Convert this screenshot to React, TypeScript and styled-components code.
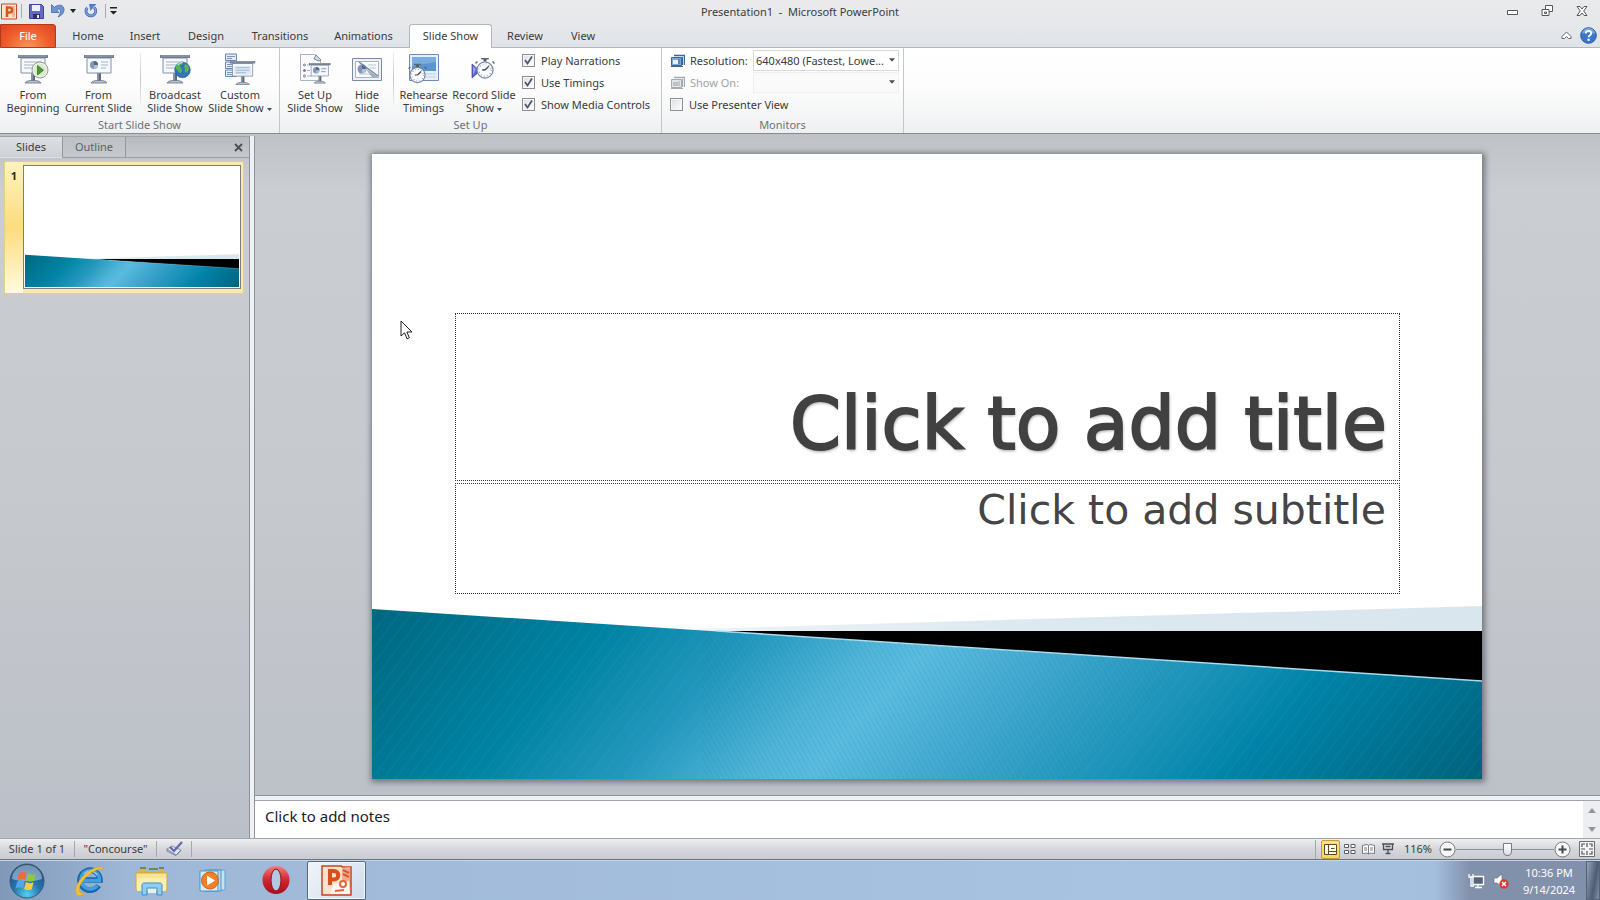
import React from "react";
import styled, { createGlobalStyle, css } from "styled-components";

const GlobalStyle = createGlobalStyle`
  *, *::before, *::after { box-sizing: border-box; }
  html, body { margin: 0; padding: 0; }
  body, button, input, select, textarea {
    font-family: "Noto Sans", "Open Sans", sans-serif;
    font-size: 11px;
    line-height: 13px;
    color: #3b3b3b;
  }
  button { background: none; border: 0; padding: 0; }
  svg { display: block; }
`;

const Window = styled.div`
  display: flex;
  flex-direction: column;
  min-height: 100vh;
`;

/* Title bar */

const TitleBar = styled.header`
  display: grid;
  grid-template-columns: 1fr auto 1fr;
  align-items: center;
  height: 24px;
  padding-bottom: 2px;
  background: linear-gradient(#eaeaed, #e6e8ea);
`;

const QuickAccess = styled.div`
  display: flex;
  align-items: center;
  padding-left: 1px;
`;

const QuickButton = styled.button<{ $gap?: number }>`
  margin-left: ${(p) => p.$gap ?? 0}px;
`;

const QuickDivider = styled.span<{ $gap: number }>`
  width: 1px;
  height: 14px;
  margin-left: ${(p) => p.$gap}px;
  background: #a9abb0;
`;

const WindowTitle = styled.h1`
  margin: 0;
  font-size: 11px;
  font-weight: 400;
  white-space: pre;
`;

const WindowControls = styled.div`
  display: flex;
  justify-content: flex-end;
  align-items: center;
  gap: 22px;
  padding-right: 12px;
`;

/* Tabs */

const TabStrip = styled.nav`
  display: flex;
  align-items: flex-end;
  height: 24px;
  border-bottom: 1px solid #b4b8be;
  background: linear-gradient(#e6e8ea, #e0e4e8);
`;

const Tab = styled.button<{ $width: number; $active?: boolean }>`
  width: ${(p) => p.$width}px;
  height: 23px;
  ${(p) =>
    p.$active &&
    css`
      height: 24px;
      margin-bottom: -1px;
      padding-bottom: 2px;
      border: 1px solid #b4b8be;
      border-bottom: 0;
      border-radius: 3px 3px 0 0;
      background: #fff;
    `}
`;

const FileTab = styled.button`
  width: 56px;
  height: 24px;
  margin-bottom: -1px;
  padding-bottom: 1px;
  border: 1px solid #b5381b;
  border-radius: 0 3px 0 0;
  background: radial-gradient(ellipse at 50% 110%, #f99a5c 0%, #ee5c2c 60%, #dd4520 100%);
  color: #fff;
`;

const TabStripEnd = styled.div`
  display: flex;
  align-items: center;
  gap: 8px;
  height: 24px;
  margin-left: auto;
  padding-right: 3px;
`;

/* Ribbon */

const Ribbon = styled.section`
  display: flex;
  height: 86px;
  border-bottom: 1px solid #888c91;
  background: linear-gradient(#fff, #fdfdfd 45%, #eff0f2);
`;

const Group = styled.div<{ $width: number }>`
  display: flex;
  flex-direction: column;
  width: ${(p) => p.$width}px;
  border-right: 1px solid #c3c6ca;
`;

const GroupBody = styled.div`
  display: flex;
  flex: 1;
  padding-left: 4px;
`;

const GroupLabel = styled.div`
  height: 15px;
  text-align: center;
  color: #6d727a;
`;

const LargeButton = styled.button<{ $width: number }>`
  display: flex;
  flex-direction: column;
  align-items: center;
  width: ${(p) => p.$width}px;
  padding-top: 5px;
  white-space: nowrap;
`;

const LargeLabel = styled.span`
  margin-top: 3px;
`;

const GroupDivider = styled.span`
  width: 1px;
  height: 52px;
  margin: 5px 4px 0 5px;
  background: linear-gradient(#eceef0, #c3c6ca, #eceef0);
`;

const ControlStack = styled.div`
  display: flex;
  flex-direction: column;
  padding: 1px 0 0 3px;
`;

const MonitorStack = styled(ControlStack)`
  padding-left: 4px;
`;

const ControlRow = styled.div`
  display: flex;
  align-items: center;
  gap: 5px;
  height: 22px;
`;

const CheckLabel = styled.label`
  display: flex;
  align-items: center;
  gap: 6px;
  height: 22px;
`;

const CheckFrame = styled.span`
  display: grid;
  width: 13px;
  height: 13px;
  border: 1px solid #8d9096;
  background: linear-gradient(135deg, #dcdee2, #fff);
  box-shadow: inset 0 0 0 1px #f6f6f7;

  & > * { grid-area: 1 / 1; }
  & > input { appearance: none; width: 11px; height: 11px; margin: 0; }
  & > svg { visibility: hidden; pointer-events: none; }
  & > input:checked + svg { visibility: visible; }
`;

const FieldName = styled.label<{ $muted?: boolean }>`
  width: 58px;
  color: ${(p) => (p.$muted ? "#a0a3a7" : "#3b3b3b")};
`;

const SelectFrame = styled.span<{ $muted?: boolean }>`
  display: grid;
  grid-template-columns: 1fr 9px;
  align-items: center;
  width: 146px;
  height: 21px;
  border: 1px solid ${(p) => (p.$muted ? "#eeeff1" : "#d5d8dc")};
  background: ${(p) => (p.$muted ? "#fafafa" : "#fff")};

  & > select {
    grid-area: 1 / 1 / 2 / 3;
    appearance: none;
    width: 100%;
    height: 19px;
    padding: 0 2px;
    border: 0;
    background: transparent;
  }
  & > svg { grid-area: 1 / 2; pointer-events: none; }
`;

/* Workspace */

const Workspace = styled.main`
  display: flex;
  flex: 1;
  padding-top: 2px;
  background: linear-gradient(#bfc3c7, #cacdd2 8%, #c6cace 50%, #bbbfc7);
`;

const SidePane = styled.aside`
  display: flex;
  flex-direction: column;
  width: 250px;
  border-right: 1px solid #8f9399;
`;

const PaneTabs = styled.div`
  display: flex;
  height: 22px;
  border-top: 1px solid #a0a4a9;
`;

const PaneTab = styled.button<{ $active?: boolean }>`
  width: 63px;
  padding-bottom: 2px;
  border-right: 1px solid #94989e;
  border-bottom: 1px solid ${(p) => (p.$active ? "transparent" : "#989ca1")};
  background: ${(p) => (p.$active ? "linear-gradient(#dcdfe3, #cdd0d5)" : "linear-gradient(#bdc1c6, #c5c9cd)")};
  color: ${(p) => (p.$active ? "#3b3b3b" : "#5d6167")};
`;

const PaneTabRest = styled.div`
  display: flex;
  flex: 1;
  align-items: center;
  justify-content: flex-end;
  padding-right: 6px;
  border-bottom: 1px solid #989ca1;
  background: linear-gradient(#b7bbc0, #c5c9cd);
`;

const SlideEntry = styled.button`
  display: grid;
  grid-template-columns: 18px 1fr;
  height: 133px;
  margin: 3px 5px 0 4px;
  padding: 3px 2px 4px 0;
  border: 1px solid #e3cf87;
  border-radius: 2px;
  background:
    linear-gradient(#fdf3c0, #fcdc7c 50%, #fffbe0) left / 18px 100% no-repeat,
    #f8eaa8;
`;

const SlideNumber = styled.span`
  align-self: start;
  padding: 4px 0 0;
  font-weight: 700;
  color: #2f2b1c;
`;

const Thumbnail = styled.span`
  display: block;
  height: 100%;
  padding: 1px;
  border: 1px solid #7b7d80;
  background: #fff;
`;

const Splitter = styled.div`
  width: 5px;
  border-right: 1px solid #8f9399;
  background: #f0f1f4;
`;

const EditorColumn = styled.div`
  display: flex;
  flex: 1;
  flex-direction: column;
  min-width: 0;
`;

const Canvas = styled.div`
  display: flex;
  flex: 1;
  padding: 18px 118px 16px 117px;
`;

const Slide = styled.article`
  position: relative;
  display: grid;
  flex: 1;
  background: #fff;
  box-shadow: 1px 1px 6px 2px rgba(60, 64, 70, 0.6);

  & > * { grid-area: 1 / 1; }
`;

const Placeholders = styled.div`
  position: relative;
  display: flex;
  flex-direction: column;
  gap: 2px;
  padding: 159px 82px 0 83px;
`;

const TitleBox = styled.h2`
  display: flex;
  align-items: flex-end;
  justify-content: flex-end;
  height: 168px;
  margin: 0;
  padding: 0 12px 14px;
  border: 1px dotted #333;
  font-family: "DejaVu Sans", "Noto Sans", sans-serif;
  font-size: 73px;
  line-height: 84px;
  font-weight: 400;
  color: #414141;
  -webkit-text-stroke: 2px #414141;
  text-shadow: 1px 2px 3px rgba(0, 0, 0, 0.35);
`;

const SubtitleBox = styled.p`
  height: 111px;
  margin: 0;
  padding: 2px 13px;
  border: 1px dotted #333;
  font-family: "DejaVu Sans", "Noto Sans", sans-serif;
  font-size: 41px;
  line-height: 48px;
  text-align: right;
  color: #454545;
`;

const Pointer = styled.svg`
  position: absolute;
  left: 28px;
  top: 166px;
`;

const NotesSplitter = styled.div`
  height: 6px;
  border-top: 1px solid #8f9399;
  border-bottom: 1px solid #a0a4aa;
  background: #f0f1f4;
`;

const NotesRow = styled.div`
  display: flex;
  height: 37px;
  background: #fff;
`;

const Notes = styled.textarea`
  flex: 1;
  padding: 5px 10px;
  border: 0;
  outline: 0;
  resize: none;
  overflow: hidden;
  font-size: 15px;
  line-height: 20px;
  color: #1c1c1c;
`;

const NotesScroll = styled.div`
  display: flex;
  flex-direction: column;
  align-items: center;
  justify-content: space-between;
  width: 17px;
  padding: 7px 0 6px;
  background: #eceef0;
`;

/* Status bar */

const StatusBar = styled.footer`
  display: flex;
  align-items: center;
  height: 22px;
  border-top: 1px solid #a2a5aa;
  border-bottom: 1px solid #6f747c;
  background: linear-gradient(#efeff1, #d5d7db 50%, #c9ccd1);
`;

const StatusCell = styled.div<{ $width: number }>`
  display: flex;
  align-items: center;
  justify-content: center;
  width: ${(p) => p.$width}px;
  height: 16px;
  padding-bottom: 1px;
  border-right: 1px solid #a4a7ad;
`;

const StatusTools = styled.div`
  display: flex;
  align-items: center;
  margin-left: auto;
  padding: 0 5px 0 5px;
  border-left: 1px solid #a4a7ad;
`;

const ViewButton = styled.button<{ $active?: boolean }>`
  display: grid;
  place-items: center;
  width: 19px;
  height: 19px;
  border: 1px solid ${(p) => (p.$active ? "#c29a3c" : "transparent")};
  border-radius: 2px;
  background: ${(p) => (p.$active ? "linear-gradient(#fbe28a, #fdd54d)" : "none")};
`;

const ZoomValue = styled.button`
  width: 42px;
  padding-bottom: 1px;
`;

const ZoomRange = styled.input`
  appearance: none;
  width: 98px;
  height: 16px;
  margin: 0;
  background: linear-gradient(#8b8f96, #8b8f96) center / 100% 1px no-repeat;

  &::-webkit-slider-thumb {
    appearance: none;
    width: 9px;
    height: 13px;
    border: 1px solid #777b82;
    border-radius: 1px 1px 5px 5px;
    background: linear-gradient(#fff, #dcdee2);
  }
`;

const FitButton = styled.button`
  margin-left: 8px;
`;

/* Taskbar */

const Taskbar = styled.nav`
  display: flex;
  align-items: center;
  height: 40px;
  border-top: 1px solid #c4d5ea;
  background:
    linear-gradient(90deg, transparent calc(100% - 165px), #8291ab calc(100% - 130px)),
    linear-gradient(90deg, #8199b9, #9fb8d7 130px, #a8c2e1 70%, #a2bddd);
`;

const TaskButton = styled.button<{ $width: number; $active?: boolean }>`
  display: grid;
  place-items: center;
  width: ${(p) => p.$width}px;
  height: 39px;
  ${(p) =>
    p.$active &&
    css`
      border: 1px solid #56667d;
      border-radius: 2px;
      background: linear-gradient(135deg, #f2f5f9, #cfdcec);
      box-shadow: inset 0 0 0 1px #f5f8fb;
    `}
`;

const Tray = styled.div`
  display: flex;
  align-items: center;
  margin-left: auto;
`;

const TrayButton = styled.button`
  margin-right: 8px;
`;

const Clock = styled.time`
  width: 64px;
  margin-right: 5px;
  line-height: 17px;
  text-align: center;
  color: #fff;
`;

const ShowDesktop = styled.button`
  width: 14px;
  height: 39px;
  border: 1px solid #56627a;
  background: linear-gradient(100deg, #94a3b8, #4f5d74 60%, #8290a7);
`;

/* Icons */

const Screen = ({ x = 0, y = 0, s = 1, children }: { x?: number; y?: number; s?: number; children?: React.ReactNode }) => (
  <g transform={`translate(${x} ${y}) scale(${s})`}>
    <path d="M13 18h4v8h-4z" fill="#8c95a5" />
    <path d="M15 18h2v8h-2z" fill="#5f697a" />
    <path d="M7 28c1-2 4-2.600 8-2.600s7 .6 8 2.600z" fill="#b9c3d0" stroke="#667083" strokeWidth=".8" />
    <path d="M3 3h24v15H3z" fill="#f6f9fd" stroke="#8290a6" />
    <path d="M0 0h30v3H0z" fill="#707b90" />
    <path d="M1 1h28" stroke="#a8b2c2" strokeWidth=".8" />
    {children ?? <path d="M6 7h17M6 10h14M6 13h16" stroke="#a5b0c3" />}
  </g>
);

const Pie = ({ x, y, r }: { x: number; y: number; r: number }) => (
  <g transform={`translate(${x} ${y}) scale(${r})`}>
    <circle r="1" fill="#8295b5" />
    <path d="M0 0V-1A1 1 0 0 1 1 0z" fill="#4b6796" />
    <path d="M0 0H1A1 1 0 0 1 0 1z" fill="#b4c1d5" />
  </g>
);

const StopWatch = ({ x, y, r }: { x: number; y: number; r: number }) => (
  <g transform={`translate(${x} ${y}) scale(${r / 9})`}>
    <path d="M-1.500 -12h3v3h-3z" fill="#4e5868" />
    <path d="M-4-12h8M-8-9l-2 2M8-9l2 2" stroke="#5b6575" strokeWidth="1.500" />
    <circle r="8.500" fill="#fbfcfe" stroke="#76869c" strokeWidth="1.300" />
    <circle r="6.500" fill="none" stroke="#8794a8" strokeWidth="1.200" strokeDasharray="1 2.400" />
    <path d="M0 0L4-4M0 0H-3" stroke="#3e4856" strokeWidth="1.400" />
  </g>
);

const BigIcon = ({ children }: { children: React.ReactNode }) => (
  <svg width="32" height="32" viewBox="0 0 32 32" fill="none" aria-hidden="true">{children}</svg>
);

const FromBeginningIcon = () => (
  <BigIcon>
    <Screen x={1} y={2} />
    <circle cx="23" cy="17" r="8" fill="#f0f5ea" stroke="#8d9d90" />
    <circle cx="23" cy="17" r="6.500" fill="#dcebd0" />
    <path d="M20.500 12.500v9.500l6-4.800z" fill="#4a9a2b" stroke="#2c6e1c" strokeWidth=".7" />
  </BigIcon>
);

const CurrentSlideIcon = () => (
  <BigIcon>
    <Screen x={1} y={2}>
      <Pie x={10} y={10} r={4} />
      <path d="M17 7h7M17 10h7M17 13h5" stroke="#a5b0c3" />
    </Screen>
  </BigIcon>
);

const BroadcastIcon = () => (
  <BigIcon>
    <Screen x={1} y={2} />
    <circle cx="23.500" cy="17" r="7.800" fill="#2f74bd" stroke="#2b568c" strokeWidth=".6" />
    <path d="M17 13c1-3 4-4 6-4 2 1 0 3-2 3 0 3 2 3 2 6-1 3-3 2-4 0-1-2-3-2-2-5zM26 11c3 0 4 3 4 5-1 3-3 4-4 3-1-2 1-3-1-5z" fill="#5bb650" />
    <path d="M19 12c1-2 3-2.500 4.500-2.300" stroke="#bfe4f8" strokeWidth="1.200" />
  </BigIcon>
);

const CustomShowIcon = () => (
  <BigIcon>
    {[1, 9, 17].map((y) => (
      <g key={y}>
        <path d={`M1.500 ${y}h11v6.500h-11z`} fill="#e5edf8" stroke="#6b84ab" />
        <path d={`M3 ${y + 2.5}h8M3 ${y + 4.5}h5`} stroke="#7993bb" />
      </g>
    ))}
    <Screen x={6} y={8} s={0.84}>
      <path d="M5 6h20v10H5z" fill="#dde9f7" />
      <path d="M7 8h16M7 11h16M7 14h12" stroke="#96abc9" />
    </Screen>
  </BigIcon>
);

const SetUpIcon = () => (
  <BigIcon>
    <path d="M1.500 1.500h15l5 5v21h-20z" fill="#fafbfd" stroke="#a9b3c2" />
    <path d="M15 6l2-4 5 5-2 1z" fill="#d3dcea" stroke="#74849d" />
    <circle cx="5.500" cy="12" r="1" stroke="#6e7a8c" />
    <circle cx="5.500" cy="17.500" r="1" fill="#6e7a8c" stroke="#6e7a8c" />
    <circle cx="5.500" cy="23" r="1" stroke="#6e7a8c" />
    <path d="M8 12h3M8 17.500h3M8 23h5" stroke="#a5b0c3" />
    <Screen x={10} y={10} s={0.72}>
      <Pie x={10} y={10} r={4.5} />
      <path d="M17 8h7M17 12h6" stroke="#8492a9" strokeWidth="1.300" />
    </Screen>
  </BigIcon>
);

const HideSlideIcon = () => (
  <BigIcon>
    <path d="M1.500 5.500h29v22h-29z" fill="#eef2f7" stroke="#7d8a9f" />
    <path d="M4.500 8.500h23v16h-23z" fill="#f7f9fc" stroke="#a8b3c4" />
    <path d="M17 12h8M19 15h6M8 21h12" stroke="#bdc7d6" />
    <Pie x={11} y={16} r={4.5} />
    <path d="M8 9l19 14" stroke="#75859f" strokeWidth="1.400" />
    <path d="M14 15l13 9h-6z" fill="#9dabbf" />
  </BigIcon>
);

const RehearseIcon = () => (
  <BigIcon>
    <path d="M1.500 1.500h29v26h-29z" fill="#e7effa" stroke="#6f8db8" />
    <path d="M4 4h24v14H4z" fill="#5a94d2" />
    <path d="M4 4h24v5L4 13z" fill="#79acdf" />
    <path d="M4 21h24M4 24h24" stroke="#bccde4" />
    <StopWatch x={9.5} y={22} r={8} />
  </BigIcon>
);

const RecordIcon = () => (
  <BigIcon>
    <path d="M4 11l8 7-8 7z" fill="#5f62c8" stroke="#3c3f98" strokeWidth=".7" />
    <path d="M5 13l3 3-3 6z" fill="#9a9df0" />
    <StopWatch x={17} y={17} r={8.5} />
  </BigIcon>
);

const DownArrow = ({ size = 5 }: { size?: number }) => (
  <svg width={size} height={size} viewBox="0 0 5 5" aria-hidden="true"><path d="M0 1h5L2.500 4z" fill="#4a4e54" /></svg>
);

const InlineArrow = styled.span`
  display: inline-block;
  margin-left: 3px;
  vertical-align: middle;
`;

const CheckMark = () => (
  <svg width="11" height="11" viewBox="0 0 11 11" aria-hidden="true">
    <path d="M2 5l2.500 3.500L9 1.500" fill="none" stroke="#4a5468" strokeWidth="1.700" />
  </svg>
);

const MonitorIcon = ({ muted }: { muted?: boolean }) => {
  const c = muted ? "#a7aaae" : "#3f6496";
  return (
    <svg width="15" height="13" viewBox="0 0 15 13" aria-hidden="true">
      <path d="M1.500 3.500h10v8h-10z" fill={muted ? "#e3e4e6" : "#7fa8da"} stroke={c} />
      <path d="M4 1.500h10.500V11" fill="none" stroke={c} strokeWidth="1.500" />
      <path d="M3 6h5v4H3z" fill={muted ? "#bfc1c4" : "#eaf2fc"} />
      <path d="M9 5v5M12.500 3v8" stroke={c} />
      <path d="M1 12.500h12" stroke={c} />
    </svg>
  );
};

/* Slide artwork, shared by the canvas and the thumbnail */

const SlideArt = ({ id }: { id: string }) => (
  <svg width="100%" height="100%" viewBox="0 0 1110 625" preserveAspectRatio="none" aria-hidden="true">
    <defs>
      <linearGradient id={`${id}-wave`} gradientUnits="userSpaceOnUse" x1="0" y1="455" x2="676" y2="1085">
        <stop offset="0" stopColor="#006780" />
        <stop offset=".2" stopColor="#0083a3" />
        <stop offset=".32" stopColor="#2397bd" />
        <stop offset=".42" stopColor="#4fb4d8" />
        <stop offset=".47" stopColor="#5bbce0" />
        <stop offset=".57" stopColor="#42a8cf" />
        <stop offset=".8" stopColor="#0083a8" />
        <stop offset="1" stopColor="#00637e" />
      </linearGradient>
      <pattern id={`${id}-weave`} width="5" height="9" patternUnits="userSpaceOnUse">
        <path d="M0 0l5 9" stroke="#0d6f95" strokeOpacity=".16" />
      </pattern>
      <pattern id={`${id}-sheen`} width="12" height="16" patternUnits="userSpaceOnUse">
        <path d="M12 0L0 16" stroke="#5fc0d8" strokeOpacity=".12" />
      </pattern>
      <linearGradient id={`${id}-pale`} x1="0" x2="1" y1="0" y2="0">
        <stop offset="0" stopColor="#eef4f7" />
        <stop offset=".4" stopColor="#dde9f0" />
        <stop offset="1" stopColor="#d9e6ed" />
      </linearGradient>
    </defs>
    <path d="M320 475L1110 452v27H350z" fill={`url(#${id}-pale)`} />
    <path d="M345 477h765v54z" fill="#000" />
    <path d="M0 455L1110 527v98H0z" fill={`url(#${id}-wave)`} />
    <path d="M0 455L1110 527v98H0z" fill={`url(#${id}-sheen)`} />
    <path d="M330 476L820 508 700 625H330z" fill={`url(#${id}-weave)`} />
    <path d="M345 477L1110 527" stroke="#a9dcec" strokeWidth="1.500" />
  </svg>
);

const tabs: [string, number, boolean?][] = [
  ["Home", 64], ["Insert", 50], ["Design", 72], ["Transitions", 76],
  ["Animations", 91], ["Slide Show", 83, true], ["Review", 66], ["View", 50],
];

const Check = ({ label, checked }: { label: string; checked?: boolean }) => (
  <CheckLabel>
    <CheckFrame>
      <input type="checkbox" defaultChecked={checked} />
      <CheckMark />
    </CheckFrame>
    {label}
  </CheckLabel>
);

const RibbonButton = ({ icon, top, bottom, width, menu }: { icon: React.ReactNode; top: string; bottom: string; width: number; menu?: boolean }) => (
  <LargeButton $width={width}>
    {icon}
    <LargeLabel>
      {top}
      <br />
      {bottom}
      {menu && <InlineArrow><DownArrow /></InlineArrow>}
    </LargeLabel>
  </LargeButton>
);

export default function App() {
  return (
    <Window>
      <GlobalStyle />
      <TitleBar>
        <QuickAccess>
          <QuickButton aria-label="PowerPoint">
            <svg width="17" height="17" viewBox="0 0 17 17">
              <path d="M.5 1h15v15H.5z" fill="#fbe3d2" stroke="#c4482a" />
              <path d="M11 3h3v11h-3z" fill="#f1b596" />
              <path d="M6 14V4.500h2.500a2.500 2.500 0 0 1 0 5H6" fill="none" stroke="#cf5a1c" strokeWidth="2.600" />
            </svg>
          </QuickButton>
          <QuickDivider $gap={3} />
          <QuickButton $gap={7} aria-label="Save">
            <svg width="15" height="15" viewBox="0 0 15 15">
              <path d="M.5.5h12l2 2v12H.5z" fill="#6466cb" stroke="#4043a4" />
              <path d="M3 1h8v6H3z" fill="#eef1fb" />
              <path d="M4 10h7v5H4z" fill="#2e3170" />
              <path d="M8 11h2v3H8z" fill="#e5e8f5" />
            </svg>
          </QuickButton>
          <QuickButton $gap={7} aria-label="Undo">
            <svg width="14" height="14" viewBox="0 0 14 14">
              <path d="M.5.5v8H8L5.500 5.800C7.500 4.300 9.500 5 9.500 7c0 2-.8 4-2.500 6 3.500-1.500 6-4 6-7.500C13 1 8-.5 3.300 3.300z" fill="#6f94d6" stroke="#4267a8" strokeWidth=".8" />
            </svg>
          </QuickButton>
          <QuickButton $gap={5} aria-label="Undo history">
            <svg width="6" height="4" viewBox="0 0 6 4"><path d="M0 0h6L3 4z" fill="#222" /></svg>
          </QuickButton>
          <QuickButton $gap={8} aria-label="Repeat">
            <svg width="14" height="14" viewBox="0 0 14 14">
              <path d="M3.300 3.800A4.800 4.800 0 1 0 10.200 3.500" fill="none" stroke="#3f66b0" strokeWidth="3" />
              <path d="M3.300 3.800A4.800 4.800 0 1 0 10.200 3.500" fill="none" stroke="#7ba0e0" strokeWidth="1.600" />
              <path d="M5.500 0h6.500L6.500 6.500z" fill="#557fc8" stroke="#3f66b0" strokeWidth=".5" />
            </svg>
          </QuickButton>
          <QuickDivider $gap={7} />
          <QuickButton $gap={4} aria-label="Customize Quick Access Toolbar">
            <svg width="7" height="8" viewBox="0 0 7 8"><path d="M0 0h7v1.500H0zM0 4h7L3.500 7.500z" fill="#222" /></svg>
          </QuickButton>
        </QuickAccess>
        <WindowTitle>{"Presentation1  -  Microsoft PowerPoint"}</WindowTitle>
        <WindowControls>
          <button aria-label="Minimize">
            <svg width="12" height="12" viewBox="0 0 12 12"><path d="M.5 5.500h10v4H.5z" fill="#fff" stroke="#55585e" /></svg>
          </button>
          <button aria-label="Restore Down">
            <svg width="13" height="12" viewBox="0 0 13 12" fill="#fff" stroke="#55585e">
              <path d="M4.500.5h7v6h-7z" /><path d="M1 4.500h7v6H1z" /><path d="M3.500 7h2v1.500h-2z" />
            </svg>
          </button>
          <button aria-label="Close">
            <svg width="12" height="10" viewBox="0 0 12 10"><path d="M1 .5h3l2 2.500L8 .5h3L7.700 5 11 9.500H8L6 7 4 9.500H1L4.300 5z" fill="#fff" stroke="#55585e" /></svg>
          </button>
        </WindowControls>
      </TitleBar>

      <TabStrip>
        <FileTab>File</FileTab>
        {tabs.map(([name, width, active]) => (
          <Tab key={name} $width={width} $active={active}>{name}</Tab>
        ))}
        <TabStripEnd>
          <button aria-label="Minimize the Ribbon">
            <svg width="11" height="9" viewBox="0 0 11 9"><path d="M1 5.500L5.500 1 10 5.500v2H7.500l-2-2-2 2H1z" fill="#fff" stroke="#66696f" /></svg>
          </button>
          <button aria-label="Help">
            <svg width="17" height="17" viewBox="0 0 17 17">
              <circle cx="8.500" cy="8.500" r="7.800" fill="#3c76c8" stroke="#2c5a9f" />
              <path d="M2 7a6.500 6 0 0 1 13 0c-4-2-9-2-13 0z" fill="#77a6e2" />
              <path d="M5.800 6.500c0-3.500 5.500-3.300 5.500-.3 0 2-2.700 2-2.700 4" fill="none" stroke="#fff" strokeWidth="1.900" />
              <circle cx="8.600" cy="12.700" r="1.200" fill="#fff" />
            </svg>
          </button>
        </TabStripEnd>
      </TabStrip>

      <Ribbon>
        <Group $width={280}>
          <GroupBody>
            <RibbonButton width={58} icon={<FromBeginningIcon />} top="From" bottom="Beginning" />
            <RibbonButton width={73} icon={<CurrentSlideIcon />} top="From" bottom="Current Slide" />
            <GroupDivider />
            <RibbonButton width={60} icon={<BroadcastIcon />} top="Broadcast" bottom="Slide Show" />
            <RibbonButton width={70} icon={<CustomShowIcon />} top="Custom" bottom="Slide Show" menu />
          </GroupBody>
          <GroupLabel>Start Slide Show</GroupLabel>
        </Group>
        <Group $width={382}>
          <GroupBody>
            <RibbonButton width={62} icon={<SetUpIcon />} top="Set Up" bottom="Slide Show" />
            <RibbonButton width={42} icon={<HideSlideIcon />} top="Hide" bottom="Slide" />
            <GroupDivider />
            <RibbonButton width={51} icon={<RehearseIcon />} top="Rehearse" bottom="Timings" />
            <RibbonButton width={70} icon={<RecordIcon />} top="Record Slide" bottom="Show" menu />
            <ControlStack>
              <Check label="Play Narrations" checked />
              <Check label="Use Timings" checked />
              <Check label="Show Media Controls" checked />
            </ControlStack>
          </GroupBody>
          <GroupLabel>Set Up</GroupLabel>
        </Group>
        <Group $width={242}>
          <GroupBody>
            <MonitorStack>
              <ControlRow>
                <MonitorIcon />
                <FieldName htmlFor="resolution">Resolution:</FieldName>
                <SelectFrame>
                  <select id="resolution"><option>640x480 (Fastest, Lowe...</option></select>
                  <DownArrow size={6} />
                </SelectFrame>
              </ControlRow>
              <ControlRow>
                <MonitorIcon muted />
                <FieldName htmlFor="show-on" $muted>Show On:</FieldName>
                <SelectFrame $muted>
                  <select id="show-on" disabled />
                  <DownArrow size={6} />
                </SelectFrame>
              </ControlRow>
              <Check label="Use Presenter View" />
            </MonitorStack>
          </GroupBody>
          <GroupLabel>Monitors</GroupLabel>
        </Group>
      </Ribbon>

      <Workspace>
        <SidePane>
          <PaneTabs>
            <PaneTab $active>Slides</PaneTab>
            <PaneTab>Outline</PaneTab>
            <PaneTabRest>
              <button aria-label="Close pane">
                <svg width="9" height="9" viewBox="0 0 9 9"><path d="M1 1l7 7M8 1L1 8" stroke="#4b4e53" strokeWidth="1.800" /></svg>
              </button>
            </PaneTabRest>
          </PaneTabs>
          <SlideEntry aria-label="Slide 1">
            <SlideNumber>1</SlideNumber>
            <Thumbnail><SlideArt id="thumb" /></Thumbnail>
          </SlideEntry>
        </SidePane>
        <Splitter />
        <EditorColumn>
          <Canvas>
            <Slide>
              <SlideArt id="slide" />
              <Placeholders>
                <TitleBox>Click to add title</TitleBox>
                <SubtitleBox>Click to add subtitle</SubtitleBox>
              </Placeholders>
              <Pointer width="13" height="20" viewBox="0 0 13 20">
                <path d="M1 1v15l3.500-3.200 2.500 6 2.400-1-2.500-5.800H12z" fill="#fff" stroke="#222" />
              </Pointer>
            </Slide>
          </Canvas>
          <NotesSplitter />
          <NotesRow>
            <Notes aria-label="Notes" defaultValue="Click to add notes" />
            <NotesScroll>
              <button aria-label="Scroll up"><svg width="8" height="5" viewBox="0 0 8 5"><path d="M0 5l4-5 4 5z" fill="#9095a0" /></svg></button>
              <button aria-label="Scroll down"><svg width="8" height="5" viewBox="0 0 8 5"><path d="M0 0l4 5 4-5z" fill="#9095a0" /></svg></button>
            </NotesScroll>
          </NotesRow>
        </EditorColumn>
      </Workspace>

      <StatusBar>
        <StatusCell $width={75}>Slide 1 of 1</StatusCell>
        <StatusCell $width={82}>"Concourse"</StatusCell>
        <StatusCell $width={35}>
          <button aria-label="Spelling">
            <svg width="17" height="15" viewBox="0 0 17 15">
              <path d="M1 8l5-3 9 4-5 5z" fill="#dfe2f0" stroke="#8a8fb0" />
              <path d="M1 8v2l9 4.500 5-5" fill="none" stroke="#7479a0" />
              <path d="M4 6l4 4 8-9" fill="none" stroke="#646aa6" strokeWidth="2.200" />
            </svg>
          </button>
        </StatusCell>
        <StatusTools>
          <ViewButton $active aria-label="Normal">
            <svg width="13" height="11" viewBox="0 0 13 11"><path d="M.5.500h12v10H.5zM4.500.5v10M7 4.500h3.500M4.500 7.500h8" fill="#fffbe8" stroke="#554c30" /></svg>
          </ViewButton>
          <ViewButton aria-label="Slide Sorter">
            <svg width="12" height="11" viewBox="0 0 12 11"><path d="M.5.5h4v3h-4zM7 .5h4v3H7zM.5 6.500h4v3h-4zM7 6.500h4v3H7z" fill="#fff" stroke="#5b5e64" /></svg>
          </ViewButton>
          <ViewButton aria-label="Reading View">
            <svg width="13" height="11" viewBox="0 0 13 11"><path d="M.5 1.500L5 .5l1.500 1L8 .5l4.500 1v8L8 9l-1.500 1L5 9l-4.500.5zM6.500 1.500V10M2 4h3M2 6h3M8 4h3M8 6h3" fill="#fff" stroke="#6c6f75" strokeWidth=".9" /></svg>
          </ViewButton>
          <ViewButton aria-label="Slide Show">
            <svg width="12" height="12" viewBox="0 0 12 12"><path d="M0 1h12M1.500 1v5.500h9V1M3.500 3.500h5M6 6.500V10M3.500 10.500h5" fill="none" stroke="#4c4f55" strokeWidth="1.300" /></svg>
          </ViewButton>
          <ZoomValue>116%</ZoomValue>
          <button aria-label="Zoom Out">
            <svg width="17" height="17" viewBox="0 0 17 17"><circle cx="8.500" cy="8.500" r="7.500" fill="#f8f8f9" stroke="#74777d" /><path d="M4.500 8.500h8" stroke="#44474d" strokeWidth="2" /></svg>
          </button>
          <ZoomRange type="range" aria-label="Zoom" min={0} max={100} defaultValue={53} />
          <button aria-label="Zoom In">
            <svg width="17" height="17" viewBox="0 0 17 17"><circle cx="8.500" cy="8.500" r="7.500" fill="#f8f8f9" stroke="#74777d" /><path d="M4.500 8.500h8M8.500 4.500v8" stroke="#44474d" strokeWidth="2" /></svg>
          </button>
          <FitButton aria-label="Fit slide to current window">
            <svg width="16" height="16" viewBox="0 0 16 16">
              <path d="M.5.5h15v15H.5z" fill="#f4f4f5" stroke="#6a6d73" />
              <path d="M3 6V3h3M10 3h3v3M13 10v3h-3M6 13H3v-3M8 2v4M8 10v4M2 8h4M10 8h4" fill="none" stroke="#4f5258" strokeWidth="1.200" />
            </svg>
          </FitButton>
        </StatusTools>
      </StatusBar>

      <Taskbar>
        <TaskButton $width={54} aria-label="Start">
          <svg width="36" height="36" viewBox="0 0 36 36">
            <defs>
              <radialGradient id="orb" cx=".5" cy=".9" r=".9">
                <stop offset="0" stopColor="#55d0f2" /><stop offset=".45" stopColor="#2575ad" /><stop offset="1" stopColor="#1d4874" />
              </radialGradient>
            </defs>
            <circle cx="18" cy="18" r="17" fill="url(#orb)" stroke="#3b5878" />
            <path d="M3 16a15 14 0 0 1 30 0c-9 3-21 3-30 0z" fill="#fff" fillOpacity=".4" />
            <path d="M10 10c3-1.500 5-1.500 7.500 0l-1.500 7c-2.500-1.500-5-1.500-7.500 0z" fill="#ee6d35" />
            <path d="M18.700 10.600c3 1.500 5 1.500 8 .2l-1.800 7c-2.700 1.300-5 1.300-7.700-.2z" fill="#93c83e" />
            <path d="M8.200 18.500c2.600-1.500 5-1.500 7.500 0l-1.700 6.700c-2.500-1.500-5-1.300-7.500.1z" fill="#52a8e8" />
            <path d="M16.900 19.100c3 1.400 5 1.400 7.700.1l-1.800 7c-2.600 1.200-5 1.200-7.600-.3z" fill="#fccb3a" />
          </svg>
        </TaskButton>
        <TaskButton $width={70} aria-label="Internet Explorer">
          <svg width="32" height="32" viewBox="0 0 32 32" fill="none">
            <path d="M25.500 20.500A10 10 0 1 1 27 15H9" stroke="#1c62ac" strokeWidth="5.600" />
            <path d="M24.500 20.500A9.300 9.300 0 1 1 26.500 15.500H10" stroke="#3da1df" strokeWidth="3.400" />
            <path d="M11 9c4-4 10-4 13 1" stroke="#8bd3f4" strokeWidth="1.500" />
            <path d="M4 30C-1 24 9 7 23 2.500c5-1.500 7 0 6.500 3.500-1-2.500-4-2-7-.5C13 10 4 21 7 27c1 2 4 1 6 0-3 3-7 5-9 3z" fill="#f2bf3b" stroke="#d99a23" strokeWidth=".5" />
          </svg>
        </TaskButton>
        <TaskButton $width={56} aria-label="Windows Explorer">
          <svg width="34" height="32" viewBox="0 0 34 32">
            <path d="M3 4h7l1 3h13V3h5v24H2z" fill="#d9b44e" />
            <path d="M5 3h6M14 4h9M24 3h5" stroke="#5b9350" strokeWidth="2" />
            <path d="M1 8h31v17H1z" fill="#f6e492" stroke="#cfa945" />
            <path d="M2 13h29v13H2z" fill="#fbefb0" />
            <path d="M7 30V20c0-1 1-2 2-2h16c1 0 2 1 2 2v10h-5v-7H12v7z" fill="#8dcdf1" stroke="#3f8fc9" />
            <path d="M13 24h8v4h-8z" fill="#dff1fb" />
          </svg>
        </TaskButton>
        <TaskButton $width={66} aria-label="Windows Media Player">
          <svg width="28" height="26" viewBox="0 0 28 26">
            <path d="M10 2h16v20H10z" fill="#c6e3f5" stroke="#63a3cd" />
            <path d="M6 2h16v21H6z" fill="#b8dcf2" stroke="#4c93c4" />
            <path d="M1 3h18v20H1z" fill="#d9eefa" stroke="#4c93c4" />
            <circle cx="11" cy="12.500" r="8.500" fill="#ee8129" stroke="#c9611a" />
            <path d="M8 7.500v10l8-5z" fill="#fff" />
          </svg>
        </TaskButton>
        <TaskButton $width={61} aria-label="Opera">
          <svg width="30" height="32" viewBox="0 0 30 32">
            <defs>
              <linearGradient id="opera" x1="0" x2="0" y1="0" y2="1">
                <stop offset="0" stopColor="#ee8080" /><stop offset=".5" stopColor="#d0252e" /><stop offset="1" stopColor="#a80f1b" />
              </linearGradient>
            </defs>
            <ellipse cx="14" cy="15" rx="13.500" ry="14" fill="url(#opera)" />
            <ellipse cx="14" cy="15" rx="5" ry="11" fill="#b3c9e2" stroke="#8c0e18" />
          </svg>
        </TaskButton>
        <TaskButton $width={59} $active aria-label="Microsoft PowerPoint">
          <svg width="32" height="31" viewBox="0 0 32 31">
            <path d="M1 1h19l2 1h8v28H1z" fill="#fbe0cd" stroke="#c8431d" strokeWidth="1.500" />
            <path d="M21 3l8-1v27h-8z" fill="#f3ab8c" />
            <path d="M22 5l6 3M22 9l6 3" stroke="#d9582c" strokeWidth="2" />
            <path d="M13 19l15-3 1 13H9z" fill="#fff6f0" />
            <circle cx="22" cy="19" r="3" fill="#fff" stroke="#e0673b" strokeWidth="2" />
            <path d="M14 26l9-1" stroke="#e0673b" strokeWidth="2" />
            <path d="M9 20V6h4a4 4 0 0 1 0 8.500H9" fill="none" stroke="#d5501c" strokeWidth="4" />
          </svg>
        </TaskButton>
        <Tray>
          <TrayButton aria-label="Network">
            <svg width="17" height="16" viewBox="0 0 17 16" fill="none">
              <path d="M5 3.500h10.500v8H5z" fill="#56657e" stroke="#fff" strokeWidth="1.300" />
              <path d="M7 14.500h7M10 12v2M1 1v3h4V1M3 4v9h3" stroke="#fff" strokeWidth="1.300" />
            </svg>
          </TrayButton>
          <TrayButton aria-label="Volume muted">
            <svg width="16" height="16" viewBox="0 0 16 16">
              <path d="M1 5h3l5-4v13l-5-4H1z" fill="#fff" stroke="#5a677d" strokeWidth=".6" />
              <circle cx="11" cy="11" r="4.700" fill="#d63a32" />
              <path d="M9 9l4 4M13 9l-4 4" stroke="#fff" strokeWidth="1.500" />
            </svg>
          </TrayButton>
          <Clock>10:36 PM<br />9/14/2024</Clock>
          <ShowDesktop aria-label="Show desktop" />
        </Tray>
      </Taskbar>
    </Window>
  );
}
